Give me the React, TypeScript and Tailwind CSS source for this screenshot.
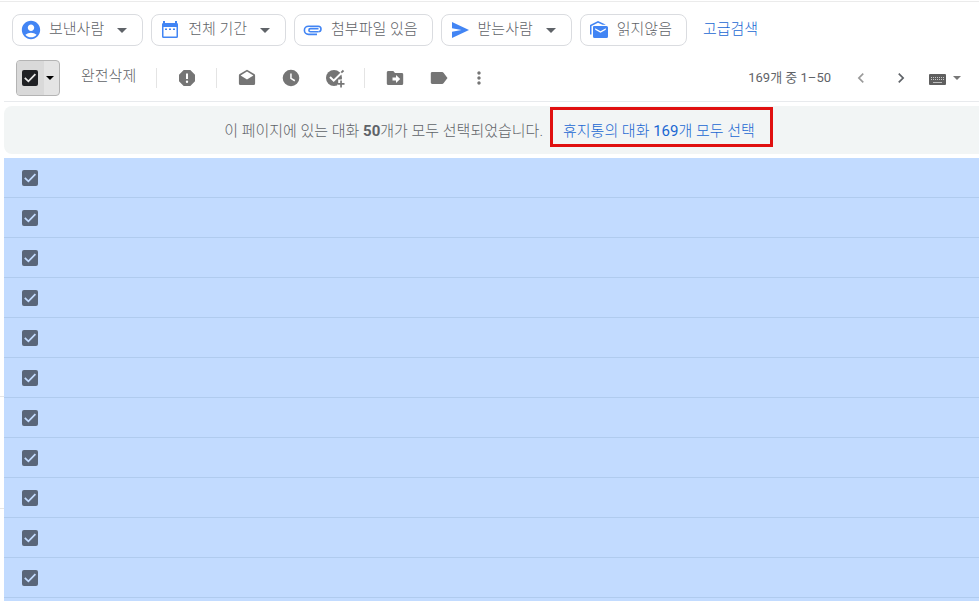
import type { ReactNode } from 'react';
import {
  MdAccountCircle,
  MdArrowDropDown,
  MdChevronLeft,
  MdChevronRight,
  MdMoreVert,
} from 'react-icons/md';

function CalendarIcon() {
  return (
    <svg viewBox="0 0 22 22" className="size-[22px] shrink-0" fill="#4285f4" aria-hidden="true">
      <path
        fillRule="evenodd"
        d="M4 2h2v2h10V2h2v2a1.500 1.500 0 0 1 1 1.500v12a1.500 1.500 0 0 1-1.500 1.500h-13A1.500 1.500 0 0 1 3 17.500v-12A1.500 1.500 0 0 1 4 4zM4.500 8v9.500h13V8z"
      />
      <path d="M6 9.500h2v1.600H6zM10 9.500h2v1.600h-2zM14 9.500h2v1.600h-2z" />
    </svg>
  );
}

function ClipIcon() {
  return (
    <svg viewBox="0 0 22 22" className="size-[22px] shrink-0" fill="none" stroke="#4285f4" strokeWidth="1.600" aria-hidden="true">
      <path d="M16 12.800H8.500a1.600 1.600 0 0 1 0-3.200h8M15 15.400H6.500a4.100 4.100 0 0 1 0-8.200h9.700a2.800 2.800 0 0 1 0 5.600" />
    </svg>
  );
}

function SendIcon() {
  return (
    <svg viewBox="0 0 22 22" className="size-[22px] shrink-0" fill="#4285f4" aria-hidden="true">
      <path d="M3 3l17 8-17 8v-6.200L12.500 11 3 9.200z" />
    </svg>
  );
}

function UnreadIcon() {
  return (
    <svg viewBox="0 0 22 22" className="size-[22px] shrink-0" fill="#4285f4" aria-hidden="true">
      <path d="M2 15.500V6l8-4 7.500 3.500v.3h-3L10 3.700 3.500 7v8.500z" />
      <path
        fillRule="evenodd"
        d="M6 7h12.500A1.500 1.500 0 0 1 20 8.500v9a1.500 1.500 0 0 1-1.500 1.500h-12A1.500 1.500 0 0 1 5 17.500V8a1 1 0 0 1 1-1zM7.200 9.200v1.600l5.300 3 5.300-3V9.200l-5.300 3z"
      />
    </svg>
  );
}

function ToolIcon({ children }: { children: ReactNode }) {
  return (
    <svg viewBox="0 0 20 20" className="size-5" fill="currentColor" aria-hidden="true">
      {children}
    </svg>
  );
}

function Chip({ icon, label, menu }: { icon: ReactNode; label: string; menu?: boolean }) {
  return (
    <button
      type="button"
      className={`flex h-8 shrink-0 items-center rounded-lg border border-[#dadce0] pl-[7px] whitespace-nowrap ${menu ? 'pr-2' : 'pr-[13px]'}`}
    >
      {icon}
      <span className="mr-px ml-[7px] pb-[3px] text-[15px] leading-5 font-light">{label}</span>
      {menu && <MdArrowDropDown className="ml-[5px] size-6 shrink-0" aria-hidden="true" />}
    </button>
  );
}

function ToolButton({ label, children }: { label: string; children: ReactNode }) {
  return (
    <button type="button" aria-label={label} className="flex size-5 shrink-0 items-center justify-center text-[#757575]">
      {children}
    </button>
  );
}

function Divider() {
  return <span className="mr-5 ml-[19px] h-5 w-px shrink-0 bg-[#e4e4e4]" />;
}

function Checkbox({ label, dark }: { label: string; dark?: boolean }) {
  return (
    <label className="grid size-4 shrink-0">
      <input
        type="checkbox"
        defaultChecked
        aria-label={label}
        className={`col-start-1 row-start-1 size-4 appearance-none rounded-xs ${dark ? 'bg-[#202124]' : 'bg-[#5a6679]'}`}
      />
      <svg
        viewBox="0 0 16 16"
        fill="none"
        strokeWidth="1.800"
        className={`pointer-events-none col-start-1 row-start-1 size-4 ${dark ? 'stroke-[#e8e8e8]' : 'stroke-[#c2dbff]'}`}
        aria-hidden="true"
      >
        <path d="M2.800 7.800l3.600 3.500 7-7.100" />
      </svg>
    </label>
  );
}

const rows = Array.from({ length: 12 }, (_, i) => i + 1);

export default function App() {
  return (
    <div className="flex h-screen flex-col overflow-hidden bg-white font-[Roboto,'Noto_Sans_CJK_KR',sans-serif] text-[#5f6368]">
      <header className="mt-px flex shrink-0 items-center gap-2 border-t border-[#ebebeb] px-3 pt-3 pb-2">
        <Chip icon={<MdAccountCircle className="size-[22px] shrink-0 text-[#4285f4]" />} label="보낸사람" menu />
        <Chip icon={<CalendarIcon />} label="전체 기간" menu />
        <Chip icon={<ClipIcon />} label="첨부파일 있음" />
        <Chip icon={<SendIcon />} label="받는사람" menu />
        <Chip icon={<UnreadIcon />} label="읽지않음" />
        <a href="#advanced" className="ml-2 pb-[3px] text-[15px] leading-5 font-light whitespace-nowrap text-[#1967d2]">
          고급검색
        </a>
      </header>

      <div className="flex min-h-0 flex-1">
        <div className="flex w-1 shrink-0 flex-col pt-[342px]">
          <span className="h-[113px] border-y border-[#e6e6e6]" />
        </div>

        <main className="flex min-w-0 flex-1 flex-col">
          <div className="flex h-12 shrink-0 items-center border-b border-[#e8eaed] pr-[18px] pl-3">
            <div className="flex h-9 shrink-0 items-center overflow-hidden rounded-sm border border-[#b4b4b4] bg-[#e4e4e4]">
              <div className="flex h-9 w-[27px] items-center bg-[#d9d9d9] pl-[5px]">
                <Checkbox label="모두 선택" dark />
              </div>
              <button type="button" aria-label="선택 옵션" className="flex h-9 w-[15px] items-center pl-0.5 text-black">
                <svg viewBox="0 0 8 4" className="h-1 w-2" fill="currentColor" aria-hidden="true">
                  <path d="M0 0h8L4 4z" />
                </svg>
              </button>
            </div>
            <button type="button" className="ml-[21px] w-14 shrink-0 pb-[3px] text-left text-[15px] leading-5 font-light whitespace-nowrap">
              완전삭제
            </button>
            <Divider />
            <ToolButton label="스팸 신고">
              <ToolIcon>
                <path
                  fillRule="evenodd"
                  d="M6.700 2h6.600L18 6.700v6.600L13.300 18H6.700L2 13.300V6.700zM9 5.500v5.500h2V5.500zM10 12.600a1.200 1.200 0 1 0 0 2.400 1.200 1.200 0 0 0 0-2.400z"
                />
              </ToolIcon>
            </ToolButton>
            <Divider />
            <div className="flex shrink-0 gap-6">
              <ToolButton label="읽은 상태로 표시">
                <ToolIcon>
                  <path fillRule="evenodd" d="M10 1.800l7.300 4.300c.5.300.8.800.8 1.300V15.500A1.500 1.500 0 0 1 16.600 17H3.400a1.500 1.500 0 0 1-1.500-1.500V7.400c0-.5.300-1 .8-1.300zM10 3.500L3.600 7.500l6.400 4 6.400-4z" />
                </ToolIcon>
              </ToolButton>
              <ToolButton label="다시 알림">
                <ToolIcon>
                  <path fillRule="evenodd" d="M10 1.700a8.300 8.300 0 1 0 0 16.600 8.300 8.300 0 0 0 0-16.600zM9.200 5.500h1.500v4.500l3.500 2.100-.8 1.300-4.200-2.600z" />
                </ToolIcon>
              </ToolButton>
              <ToolButton label="할 일에 추가">
                <ToolIcon>
                  <circle cx="9" cy="10" r="8" />
                  <path d="M5 9l3.700 3.700L17 4.500" fill="none" stroke="#fff" strokeWidth="2" />
                  <path d="M16.300 4.700l2.200-2.200" fill="none" stroke="currentColor" strokeWidth="1.800" />
                  <path d="M13.200 11.500h6.800v8.500h-7.500v-4h.7z" fill="#fff" />
                  <path d="M15.200 12.500h1.700v2.600h2.600v1.700h-2.600v2.600h-1.700v-2.600h-2.600v-1.700h2.600z" />
                </ToolIcon>
              </ToolButton>
            </div>
            <Divider />
            <div className="flex shrink-0 gap-6">
              <ToolButton label="이동">
                <ToolIcon>
                  <path fillRule="evenodd" d="M3.300 3h5l1.700 2h6.800c.8 0 1.400.6 1.400 1.400v9c0 .8-.6 1.500-1.400 1.500H3.300c-.8 0-1.500-.7-1.500-1.500V4.500c0-.8.7-1.500 1.500-1.500zM11 7v2.500H7.500v3H11V15l4.200-4z" />
                </ToolIcon>
              </ToolButton>
              <ToolButton label="라벨">
                <ToolIcon>
                  <path d="M3.200 4h10c.5 0 1 .2 1.300.7L18.500 10l-4 5.300c-.3.500-.8.700-1.300.7h-10C2.400 16 1.800 15.400 1.800 14.600V5.400C1.800 4.600 2.400 4 3.200 4z" />
                </ToolIcon>
              </ToolButton>
            </div>
            <div className="ml-5 flex">
              <ToolButton label="더보기">
                <MdMoreVert className="size-5 shrink-0" />
              </ToolButton>
            </div>

            <span className="ml-auto text-[13px] leading-5 whitespace-nowrap">169개 중 1–50</span>
            <div className="ml-5 flex gap-5">
              <button type="button" aria-label="이전" className="text-[#9a9a9a]">
                <MdChevronLeft className="size-5" />
              </button>
              <button type="button" aria-label="다음" className="text-[#5f6368]">
                <MdChevronRight className="size-5" />
              </button>
            </div>
            <button type="button" aria-label="입력 도구" className="ml-[18px] flex items-center gap-[7px] text-[#5f5f5f]">
              <svg viewBox="0 0 17 11" className="mt-1 h-[11px] w-[17px]" aria-hidden="true">
                <rect width="17" height="11" rx="1" fill="currentColor" />
                <path d="M2 3.500h13M2 5.500h13" stroke="#c8c8c8" strokeDasharray="1 1" />
                <path d="M4 8.500h9" stroke="#c0c0c0" />
              </svg>
              <svg viewBox="0 0 8 4" className="h-1 w-2" fill="#777" aria-hidden="true">
                <path d="M0 0h8L4 4z" />
              </svg>
            </button>
          </div>

          <div className="mt-1 flex h-12 shrink-0 items-center justify-center rounded-l-lg bg-[#f2f5f5] pt-0.5 pr-1 text-[15px] leading-5 font-light whitespace-nowrap">
            <p>
              이 페이지에 있는 대화 <b className="font-bold">50</b>개가 모두 선택되었습니다.
            </p>
            <a href="#all" className="relative ml-5 text-[#1967d2]">
              휴지통의 대화 <span className="font-normal">169</span>개 모두 선택
              <span className="pointer-events-none absolute -top-[14px] -right-[18px] -left-[13px] h-10 border-3 border-[#e01010]" />
            </a>
          </div>

          <ul className="mt-1 min-h-0 flex-1 overflow-hidden bg-[#c2dbff]">
            {rows.map((n) => (
              <li key={n} className="flex h-10 items-center border-b border-[#b0cbee] pl-[18px]">
                <Checkbox label={`대화 ${n}`} />
              </li>
            ))}
          </ul>
        </main>
      </div>
    </div>
  );
}
